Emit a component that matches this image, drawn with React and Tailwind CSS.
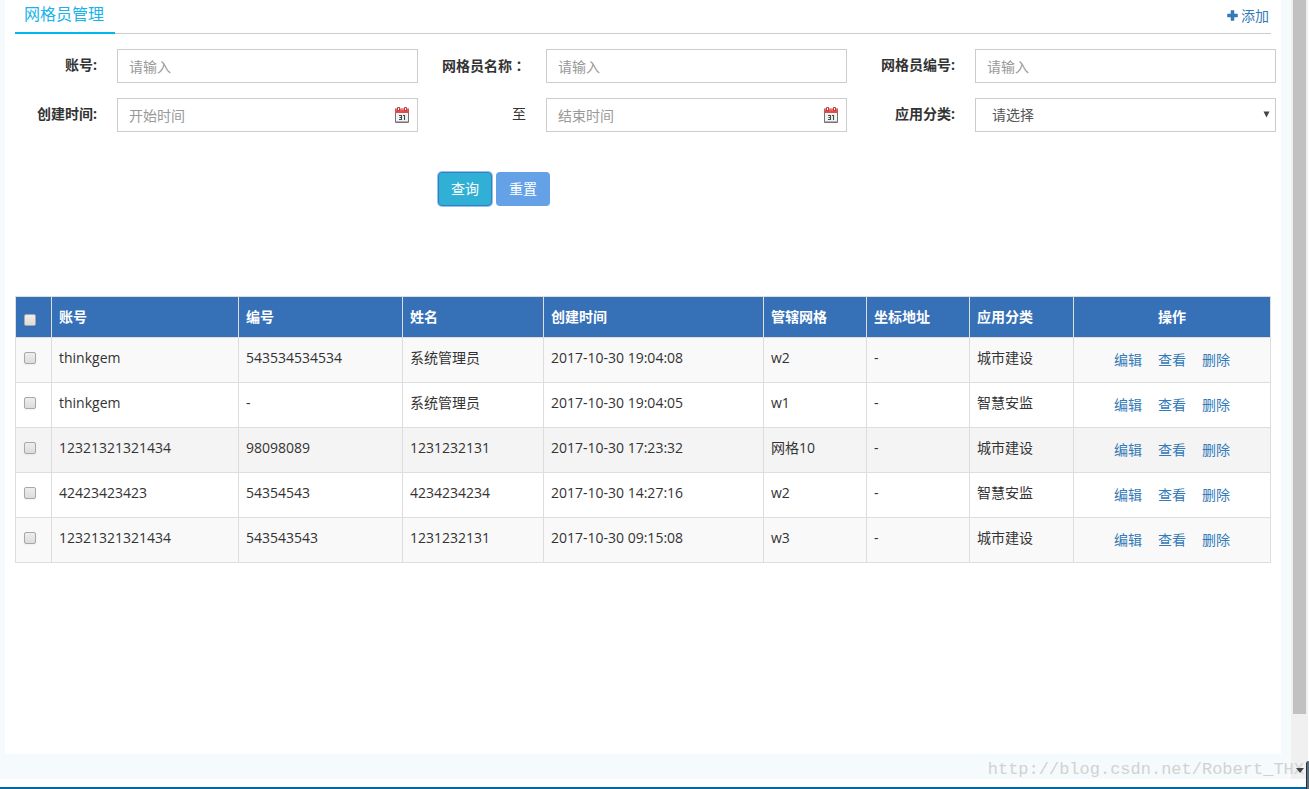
import { useState } from 'react';
import clsx from 'clsx';

const COLUMNS = [
  { key: 'account', label: '账号', width: 'w-[187px]' },
  { key: 'code', label: '编号', width: 'w-[164px]' },
  { key: 'name', label: '姓名', width: 'w-[141px]' },
  { key: 'created', label: '创建时间', width: 'w-[220px]' },
  { key: 'grid', label: '管辖网格', width: 'w-[103px]' },
  { key: 'address', label: '坐标地址', width: 'w-[103px]' },
  { key: 'category', label: '应用分类', width: 'w-[104px]' },
];

const ROWS = [
  { id: 1, account: 'thinkgem', code: '543534534534', name: '系统管理员', created: '2017-10-30 19:04:08', grid: 'w2', address: '-', category: '城市建设' },
  { id: 2, account: 'thinkgem', code: '-', name: '系统管理员', created: '2017-10-30 19:04:05', grid: 'w1', address: '-', category: '智慧安监' },
  { id: 3, account: '12321321321434', code: '98098089', name: '1231232131', created: '2017-10-30 17:23:32', grid: '网格10', address: '-', category: '城市建设' },
  { id: 4, account: '42423423423', code: '54354543', name: '4234234234', created: '2017-10-30 14:27:16', grid: 'w2', address: '-', category: '智慧安监' },
  { id: 5, account: '12321321321434', code: '543543543', name: '1231232131', created: '2017-10-30 09:15:08', grid: 'w3', address: '-', category: '城市建设' },
];

const ACTIONS = ['编辑', '查看', '删除'];

const controlClass = 'block w-full h-[34px] border border-[#ccc] bg-white px-[11px] text-sm text-[#555] placeholder:text-[#999] focus:outline-none';

function CalendarIcon() {
  return (
    <svg width="14" height="16" viewBox="0 0 14 16" className="absolute right-[9px] top-[9px] pointer-events-none">
      <rect x="0" y="2" width="14" height="14" rx="1" fill="#7d6f70" />
      <rect x="1" y="6" width="12" height="8.500" fill="#edf4f5" />
      <rect x="0" y="1.500" width="14" height="4.500" fill="#e34a4a" />
      <rect x="1" y="2" width="12" height="1.500" fill="#ee7373" />
      <rect x="2" y="0" width="3" height="4" rx="1" fill="#b04040" />
      <rect x="3" y="1" width="1" height="2" fill="#fff" />
      <rect x="9" y="0" width="3" height="4" rx="1" fill="#b04040" />
      <rect x="10" y="1" width="1" height="2" fill="#fff" />
      <path d="M4 8.500H6.500V12.500H4M4.500 10.500H6.500M8 8.500H9.500V13" fill="none" stroke="#4a4a4a" strokeWidth="1.100" />
    </svg>
  );
}

function PlusIcon() {
  return (
    <svg width="11" height="11" viewBox="0 0 11 11">
      <path d="M4 0.500H7V4H10.500V7H7V10.500H4V7H0.500V4H4Z" fill="currentColor" stroke="currentColor" strokeWidth="0.500" strokeLinejoin="round" />
    </svg>
  );
}

function Field({ id, label, plain, children }) {
  return (
    <div className="flex items-start gap-5">
      <label
        htmlFor={id}
        className={clsx('w-[92px] shrink-0 pt-1.5 text-right text-sm whitespace-nowrap', !plain && 'font-bold')}
      >
        {label}
      </label>
      <div className="relative flex-1 min-w-0">{children}</div>
    </div>
  );
}

function Checkbox({ label, checked, onChange }) {
  return (
    <input
      type="checkbox"
      aria-label={label}
      checked={checked}
      onChange={onChange}
      className="block appearance-none w-3 h-3 rounded-xs border border-[#a8a8a8] bg-linear-to-b from-[#eee] to-[#dcdcdc] shadow-xs checked:bg-[#3670b7]"
    />
  );
}

function SearchForm() {
  return (
    <form className="mr-[5px]" onSubmit={e => e.preventDefault()}>
      <div className="grid grid-cols-3 gap-x-4 gap-y-[15px] pt-[15px]">
        <Field id="account" label="账号:">
          <input id="account" type="text" placeholder="请输入" className={controlClass} />
        </Field>
        <Field id="name" label={<>网格员名称<span className="font-['Noto_Sans_CJK_TC',sans-serif]" lang="zh-Hant">：</span></>}>
          <input id="name" type="text" placeholder="请输入" className={controlClass} />
        </Field>
        <Field id="code" label="网格员编号:">
          <input id="code" type="text" placeholder="请输入" className={controlClass} />
        </Field>
        <Field id="start" label="创建时间:">
          <input id="start" type="text" placeholder="开始时间" className={controlClass} />
          <CalendarIcon />
        </Field>
        <Field id="end" label="至" plain>
          <input id="end" type="text" placeholder="结束时间" className={controlClass} />
          <CalendarIcon />
        </Field>
        <Field id="category" label="应用分类:">
          <select id="category" className="block appearance-none w-full h-[34px] border border-[#ccc] bg-white pl-4 text-sm text-[#555] focus:outline-none">
            <option>请选择</option>
            <option>城市建设</option>
            <option>智慧安监</option>
          </select>
          <svg width="7" height="7" viewBox="0 0 7 7" className="absolute right-1.5 top-[13px] pointer-events-none">
            <path d="M0.500 0.500H6.500L3.500 6.500Z" fill="#444" />
          </svg>
        </Field>
      </div>
      <div className="grid grid-cols-3 gap-x-4 mt-10">
        <div className="col-start-2 flex gap-1 pl-1">
          <button type="submit" className="w-[54px] h-[34px] rounded border border-[#2e80c0] bg-[#31b0d5] text-sm text-white ring-1 ring-[#9dc0f5]">
            查询
          </button>
          <button type="reset" className="w-[54px] h-[34px] rounded bg-[#64a1e6] text-sm text-white">
            重置
          </button>
        </div>
      </div>
    </form>
  );
}

function MemberTable() {
  const [selected, setSelected] = useState([]);
  const allSelected = selected.length === ROWS.length;

  const toggle = id =>
    setSelected(prev => (prev.includes(id) ? prev.filter(i => i !== id) : [...prev, id]));

  return (
    <table className="w-full table-fixed border-collapse text-sm leading-6">
      <thead>
        <tr className="h-[41px] bg-[#3670b7] text-white">
          <th className="w-[36px] border border-[#ddd] px-2 pt-1.5">
            <Checkbox
              label="全选"
              checked={allSelected}
              onChange={() => setSelected(allSelected ? [] : ROWS.map(r => r.id))}
            />
          </th>
          {COLUMNS.map(col => (
            <th key={col.key} className={clsx('border border-[#ddd] px-[7px] text-left font-bold', col.width)}>
              {col.label}
            </th>
          ))}
          <th className="w-[197px] border border-[#ddd] px-[7px] text-center font-bold">操作</th>
        </tr>
      </thead>
      <tbody>
        {ROWS.map(row => (
          <tr
            key={row.id}
            className={clsx('h-[45px] hover:bg-[#f4f4f4]', row.id === 3 ? 'bg-[#f4f4f4]' : 'odd:bg-[#f9f9f9]')}
          >
            <td className="border border-[#ddd] px-2 pt-3.5 align-top">
              <Checkbox
                label={`选择 ${row.account}`}
                checked={selected.includes(row.id)}
                onChange={() => toggle(row.id)}
              />
            </td>
            {COLUMNS.map(col => (
              <td key={col.key} className="border border-[#ddd] px-[7px] pt-2 align-top whitespace-nowrap">
                {row[col.key]}
              </td>
            ))}
            <td className="border border-[#ddd] px-[7px] align-middle">
              <div className="flex justify-center gap-4 text-[#337ab7]">
                {ACTIONS.map(action => (
                  <a key={action} href="#" className="hover:underline">{action}</a>
                ))}
              </div>
            </td>
          </tr>
        ))}
      </tbody>
    </table>
  );
}

function Scrollbar() {
  return (
    <div className="w-[17px] mr-px shrink-0 flex flex-col items-center bg-[#f0f0f0]">
      <div className="w-[13px] flex-1 bg-[#c1c1c1]" />
      <div className="relative z-10 h-[65px] flex flex-col justify-end pb-1.5">
        <svg width="8" height="5" viewBox="0 0 8 5">
          <path d="M0 0H8L4 5Z" fill="#444" />
        </svg>
      </div>
    </div>
  );
}

export default function App() {
  return (
    <div className="relative min-h-screen flex flex-col bg-white text-[#333] font-['Open_Sans','Noto_Sans_CJK_SC',sans-serif]">
      <div className="flex-1 flex">
        <div className="flex-1 min-w-0 flex bg-[#f5fafd] pl-[5px] pr-2.5 pb-[25px]">
          <main className="flex-1 min-w-0 bg-white">
            <header className="mx-2.5 h-[34px] flex justify-between border-b border-[#ccc]">
              <h1 className="w-[100px] h-[34px] border-b-2 border-[#00b7ee] pl-[9px] pt-0.5 text-base leading-6 text-[#17b3ea]">
                网格员管理
              </h1>
              <a href="#" className="flex items-center gap-[3px] pr-0.5 pb-0.5 text-sm text-[#337ab7]">
                <PlusIcon />
                添加
              </a>
            </header>
            <SearchForm />
            <div className="mx-2.5 mt-[90px]">
              <MemberTable />
            </div>
          </main>
        </div>
        <Scrollbar />
      </div>
      <footer className="h-2.5 border-b-2 border-[#0566a0]" />
      <div className="absolute right-[5px] bottom-[7px] font-['Liberation_Mono',monospace] text-[17px] leading-6 text-[#d2d2d0] pointer-events-none">
        http://blog.csdn.net/Robert_THX
      </div>
      <div className="absolute right-0 bottom-0 w-[3px] h-7 rounded-tl-sm border-l border-[#22303c] bg-[#5a6f7d]" />
    </div>
  );
}
